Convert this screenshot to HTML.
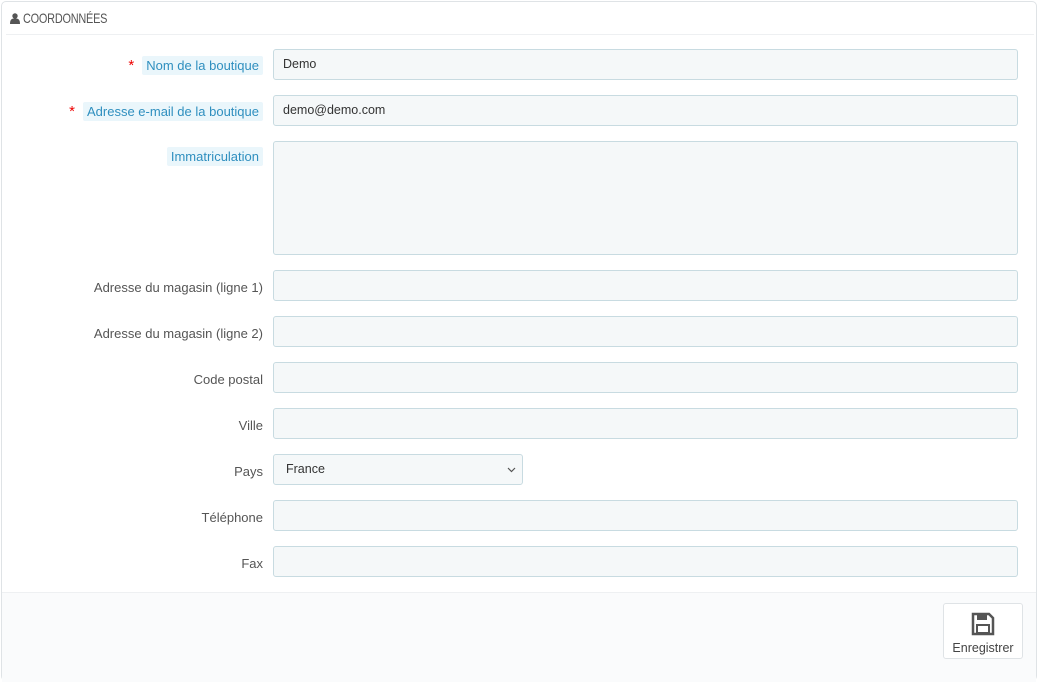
<!DOCTYPE html>
<html><head><meta charset="utf-8"><style>
*{box-sizing:border-box;margin:0;padding:0}
body{width:1039px;height:665px;background:#fff;font-family:"Liberation Sans",sans-serif;overflow:hidden;position:relative}
.panel{position:absolute;left:1px;top:1px;width:1036px;height:680px;border:1px solid #dfe3e6;border-radius:5px;background:#fff}
.hd{position:absolute;left:4px;top:0;width:1028px;height:33px;border-bottom:1px solid #eef0f2;font-size:12px;color:#555;line-height:32px;padding-left:4px}
.ht{display:inline-block;font-size:14px;transform:scaleX(0.78);transform-origin:left center;letter-spacing:-0.3px}
.ft{position:absolute;left:0;top:590px;width:1034px;height:90px;background:#fafbfc;border-top:1px solid #eef0f2}
.lbl{position:absolute;right:776px;font-size:13px;color:#555;text-align:right;white-space:nowrap}
.hint{background:#eaf6fb;color:#2f8fbf;padding:2px 4px;border-radius:2px}
.star{color:#e00;margin-right:8px;font-size:15px}
.in{position:absolute;left:273px;width:745px;height:31px;background:#f5f8f9;border:1px solid #c8dbe1;border-radius:3px;font-size:12.5px;color:#333;padding-left:9px;line-height:29px}
.btn{position:absolute;left:943px;top:603px;width:80px;height:56px;border:1px solid #dfe3e6;border-radius:3px;background:#fff;text-align:center;font-size:12.5px;color:#444}
</style></head><body>
<div class="panel">
<div class="hd"><svg width="10" height="11" viewBox="0 0 10 11" style="vertical-align:-1px"><circle cx="5" cy="3" r="2.7" fill="#555"/><path d="M0 11 C0 6 2 5.5 5 5.5 C8 5.5 10 6 10 11Z" fill="#555"/></svg> <span class="ht">COORDONNÉES</span></div>
<div class="ft"></div>
</div>
<div class="lbl" style="top:57px"><span class="star">*</span><span class="hint">Nom de la boutique</span></div>
<div class="in" style="top:49px">Demo</div>
<div class="lbl" style="top:103px"><span class="star">*</span><span class="hint">Adresse e-mail de la boutique</span></div>
<div class="in" style="top:95px">demo@demo.com</div>
<div class="lbl" style="top:149px"><span class="hint">Immatriculation</span></div>
<div class="in" style="top:141px;height:114px"></div>
<div class="lbl" style="top:280px">Adresse du magasin (ligne 1)</div>
<div class="in" style="top:270px"></div>
<div class="lbl" style="top:326px">Adresse du magasin (ligne 2)</div>
<div class="in" style="top:316px"></div>
<div class="lbl" style="top:372px">Code postal</div>
<div class="in" style="top:362px"></div>
<div class="lbl" style="top:418px">Ville</div>
<div class="in" style="top:408px"></div>
<div class="lbl" style="top:464px">Pays</div>
<div class="in" style="top:454px;width:250px;padding-left:12px">France<svg width="9" height="6" viewBox="0 0 9 6" style="position:absolute;right:6px;top:12px"><path d="M1 1 L4.5 4.5 L8 1" fill="none" stroke="#555" stroke-width="1.2"/></svg></div>
<div class="lbl" style="top:510px">Téléphone</div>
<div class="in" style="top:500px"></div>
<div class="lbl" style="top:556px">Fax</div>
<div class="in" style="top:546px"></div>
<div class="btn"><svg width="24" height="24" viewBox="0 0 24 24" style="margin-top:8px"><path d="M2 2 H18 L22 6 V22 H2 Z" fill="none" stroke="#555" stroke-width="2.5"/><rect x="6" y="2" width="10" height="6" fill="#555"/><rect x="6" y="13" width="12" height="8" fill="none" stroke="#555" stroke-width="2"/></svg><div style="margin-top:2px">Enregistrer</div></div>
</body></html>
